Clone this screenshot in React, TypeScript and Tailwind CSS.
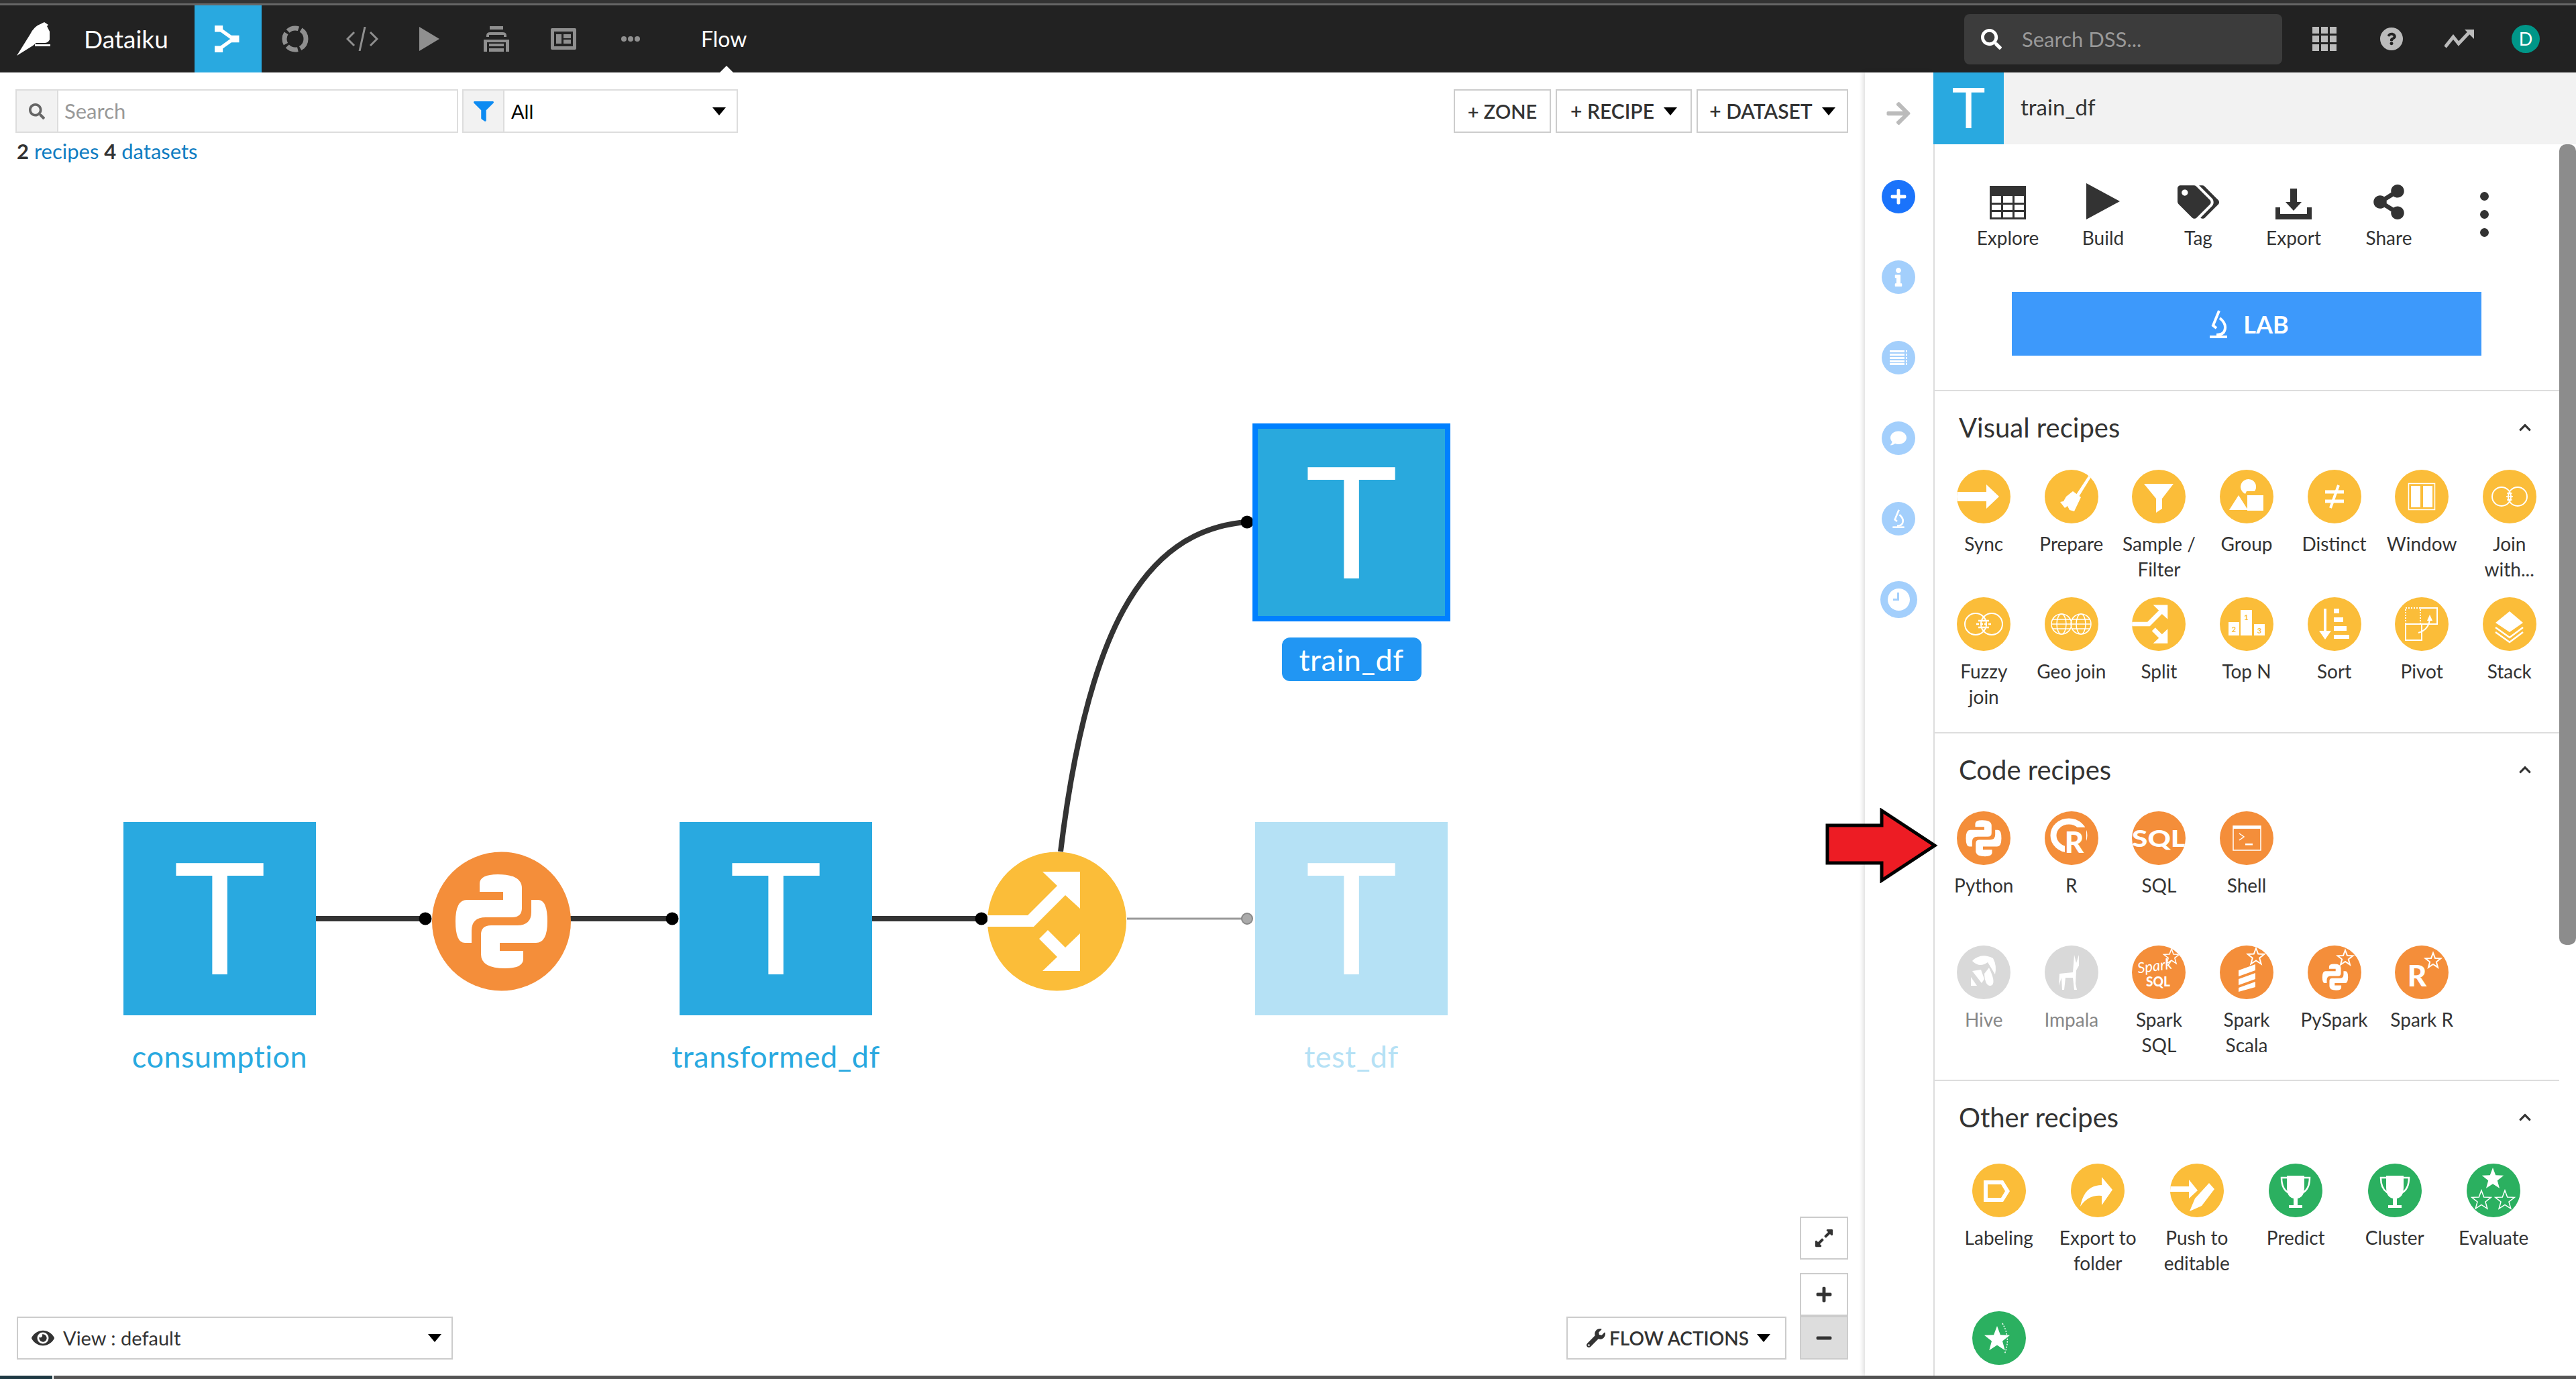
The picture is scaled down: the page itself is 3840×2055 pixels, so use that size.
import React from "react";
import { FaSearch, FaTags, FaShareAlt, FaEye, FaWrench, FaQuestion, FaFilter, FaChevronUp, FaArrowRight, FaPlus, FaInfo, FaComment, FaExpandAlt, FaMinus } from "react-icons/fa";

const SNAKE = "M71 60 V48 Q71 34 98 34 Q134 34 134 55 V84 Q134 98 119 98 H80 Q59 98 59 118 V136 H49 Q35 136 35 104 Q35 72 52 72 H106 V60 Z";
const Python = () => (
  <g fill="#fff">
    <path d={SNAKE} />
    <path d={SNAKE} transform="rotate(180 103.5 104)" />
  </g>
);
const SplitArrows = () => (
  <g fill="#fff">
    <polygon points="0,95 60,95 104,51 82,30 138,30 138,85 116,65 69,112 0,112" />
    <polygon points="77,130 90,117 116,143 138,122 138,178 82,178 104,157" />
  </g>
);
const Star = ({ x, y, r, fill = "#fff", stroke, sw = 1.5 }: { x: number; y: number; r: number; fill?: string; stroke?: string; sw?: number }) => {
  const pts: string[] = [];
  for (let i = 0; i < 10; i++) {
    const a = (-90 + i * 36) * (Math.PI / 180);
    const rr = i % 2 === 0 ? r : r * 0.42;
    pts.push(`${x + rr * Math.cos(a)},${y + rr * Math.sin(a)}`);
  }
  return <polygon points={pts.join(" ")} fill={fill} stroke={stroke} strokeWidth={sw} />;
};
const Trophy = () => (
  <g>
    <path d="M27 18 H53 V36 Q53 50 43 52 V62 H50 V66 H30 V62 H37 V52 Q27 50 27 36 Z" fill="#fff" />
    <path d="M27 21 H19 Q19 38 30 44 M53 21 H61 Q61 38 50 44" fill="none" stroke="#fff" strokeWidth="2.5" />
  </g>
);
const svgText = { fontFamily: "Lato, sans-serif", fill: "#fff" } as const;

const icons: Record<string, React.ReactNode> = {
  sync: <polygon points="0,33 44,33 44,22 63,40 44,58 44,47 0,47" fill="#fff" />,
  prepare: (
    <g fill="#fff">
      <polygon points="66,8 69,11 51,40 47,37" />
      <polygon points="42,32 54,41 44,62 37,60 34,54 30,57 23,48 28,47 32,40" />
    </g>
  ),
  filter: <polygon points="18,21 62,21 45,43 45,58 36,64 36,43" fill="#fff" />,
  group: (
    <g fill="#fff">
      <path d="M38 36 A11.5 11.5 0 1 1 52 32 L40 32 Z" />
      <polygon points="28,38 42,60 14,60" />
      <rect x="41" y="38" width="24" height="23" />
    </g>
  ),
  distinct: (
    <g stroke="#fff" fill="none">
      <path d="M26 33 H54 M26 47 H54" strokeWidth="5" />
      <path d="M46 23 L34 57" strokeWidth="4" />
    </g>
  ),
  window: (
    <g>
      <rect x="20.5" y="20.5" width="39" height="39" fill="none" stroke="#fff" strokeWidth="1.5" />
      <rect x="24" y="24" width="14" height="32" fill="#fff" />
      <rect x="42" y="24" width="14" height="32" fill="#fff" />
    </g>
  ),
  join: (
    <g fill="none" stroke="#fff" strokeWidth="2">
      <circle cx="28" cy="40" r="14" />
      <circle cx="52" cy="40" r="14" />
      <path d="M36 35 H44 M35 40 H45 M36 45 H44" strokeWidth="1.5" />
    </g>
  ),
  fuzzy: (
    <g fill="none" stroke="#fff" strokeWidth="2">
      <circle cx="28" cy="40" r="16" />
      <circle cx="52" cy="40" r="16" />
      <path d="M32 35 H48 M29 40 H51 M32 45 H48" strokeWidth="2.5" strokeDasharray="4 2" />
    </g>
  ),
  geo: (
    <g fill="none" stroke="#fff" strokeWidth="1.5">
      <circle cx="25" cy="40" r="15" />
      <circle cx="54" cy="40" r="15" />
      <ellipse cx="25" cy="40" rx="7" ry="15" />
      <ellipse cx="54" cy="40" rx="7" ry="15" />
      <path d="M10 40 H40 M12 33 H38 M12 47 H38 M39 40 H69 M41 33 H67 M41 47 H67" />
    </g>
  ),
  split: (
    <svg x="0" y="0" width="80" height="80" viewBox="0 0 207 207">
      <SplitArrows />
    </svg>
  ),
  top: (
    <g>
      <rect x="31" y="19" width="17" height="38" fill="#fff" />
      <rect x="13" y="37" width="16" height="20" fill="#fff" />
      <rect x="51" y="40" width="16" height="17" fill="#fff" />
      <text x="39.5" y="34" textAnchor="middle" fontSize="11" fontWeight="700" style={{ ...svgText, fill: "#fbbd39" }}>1</text>
      <text x="21" y="52" textAnchor="middle" fontSize="11" fontWeight="700" style={{ ...svgText, fill: "#fbbd39" }}>2</text>
      <text x="59" y="54" textAnchor="middle" fontSize="11" fontWeight="700" style={{ ...svgText, fill: "#fbbd39" }}>3</text>
    </g>
  ),
  sort: (
    <g fill="#fff">
      <polygon points="24,17 28,17 28,50 35,50 26,63 17,50 24,50" />
      <rect x="39" y="17" width="8" height="7" />
      <rect x="39" y="30" width="14" height="7" />
      <rect x="39" y="43" width="19" height="7" />
      <rect x="39" y="56" width="23" height="6" />
    </g>
  ),
  pivot: (
    <g fill="none" stroke="#fff" strokeWidth="2">
      <path d="M16 16 H38 V40 H16 Z" strokeDasharray="2 2" />
      <path d="M38 16 H63 V40 H40" />
      <path d="M16 40 H40 V64 H16 Z" />
      <path d="M35 53 Q52 48 52 30" />
      <polygon points="52,26 56,35 48,35" fill="#fff" stroke="none" />
    </g>
  ),
  stack: (
    <g>
      <polygon points="40,21 60,38 40,52 19,38" fill="#fff" />
      <path d="M19 45 L40 60 L60 45 M19 52 L40 67 L60 52" fill="none" stroke="#fff" strokeWidth="2.5" />
    </g>
  ),
  python: (
    <svg x="0" y="0" width="80" height="80" viewBox="0 0 207 207">
      <Python />
    </svg>
  ),
  r: (
    <g>
      <ellipse cx="36" cy="36" rx="23" ry="21" fill="none" stroke="#fff" strokeWidth="9" />
      <rect x="30" y="24" width="32" height="40" fill="#f48e3a" />
      <text x="44" y="62" textAnchor="middle" fontSize="44" fontWeight="900" style={svgText}>R</text>
    </g>
  ),
  sql: <text x="40" y="53" textAnchor="middle" fontSize="35" fontWeight="900" textLength="80" lengthAdjust="spacingAndGlyphs" style={svgText}>SQL</text>,
  shell: (
    <g>
      <rect x="20" y="22" width="41" height="36" fill="none" stroke="#fff" strokeWidth="1.5" />
      <rect x="20" y="22" width="41" height="4" fill="#fff" />
      <path d="M29 33 L36 38 L29 43" fill="none" stroke="#fff" strokeWidth="1.5" />
      <rect x="38" y="48" width="11" height="2.5" fill="#fff" />
    </g>
  ),
  hive: (
    <g fill="#fff">
      <path d="M23 23 Q36 10 54 19 Q60 30 57 43 L46 25 Q34 34 23 23 Z" />
      <path d="M48 33 Q60 58 50 60 Q42 60 41 42 Z" />
      <polygon points="23,38 36,36 41,50 37,56" />
      <polygon points="21,47 30,60 21,60" />
    </g>
  ),
  impala: (
    <g fill="#fff">
      <path d="M44 14 L47 26 L51 14 L51 30 L47 37 L46 57 L48 66 L44 66 L42 48 L31 48 L29 66 L26 66 L25 48 L21 60 L22 42 L42 40 Z" />
    </g>
  ),
  sparksql: (
    <g>
      <Star x={59} y={17} r={12} fill="none" stroke="#fff" />
      <text x="35" y="38" textAnchor="middle" fontSize="22" fontStyle="italic" textLength="52" lengthAdjust="spacingAndGlyphs" transform="rotate(-8 35 38)" style={svgText}>Spark</text>
      <text x="39" y="61" textAnchor="middle" fontSize="21" fontWeight="900" textLength="36" lengthAdjust="spacingAndGlyphs" style={svgText}>SQL</text>
    </g>
  ),
  sparkscala: (
    <g>
      <Star x={54} y={17} r={13} fill="none" stroke="#fff" sw={2} />
      <path d="M28 37 L53 28 V37 L28 46 Z M28 50 L53 41 V50 L28 59 Z M28 63 L53 54 V62 L28 69 Z" fill="#fff" />
    </g>
  ),
  pyspark: (
    <g>
      <svg x="12" y="18" width="58" height="58" viewBox="0 0 207 207">
        <Python />
      </svg>
      <Star x={56} y={19} r={12} fill="#f48e3a" stroke="#fff" sw={2} />
    </g>
  ),
  sparkr: (
    <g>
      <text x="33" y="61" textAnchor="middle" fontSize="44" fontWeight="900" style={svgText}>R</text>
      <Star x={57} y={23} r={12} fill="none" stroke="#fff" sw={2} />
    </g>
  ),
  labeling: (
    <g>
      <path d="M17 25 H46 L56 41 L46 57 H17 Z" fill="#fff" />
      <path d="M23 31 H43 L49 41 L43 51 H23 Z" fill="#fbbd39" />
    </g>
  ),
  exportf: <path d="M46 20 L62 39 L46 62 V48 Q26 46 14 64 Q20 32 46 32 Z" fill="#fff" />,
  pushto: (
    <g fill="#fff">
      <polygon points="0,34 28,34 28,24 41,40 28,52 28,42 0,42" />
      <polygon points="58,29 66,38 47,63 29,71 37,52" />
    </g>
  ),
  predict: <Trophy />,
  cluster: <Trophy />,
  evaluate: (
    <g>
      <Star x={39} y={23} r={17} />
      <Star x={22} y={55} r={15} fill="none" stroke="#fff" />
      <Star x={57} y={55} r={15} fill="none" stroke="#fff" />
    </g>
  ),
  goal: (
    <g>
      <Star x={37} y={42} r={20} />
      <path d="M45 18 Q58 40 48 64" fill="none" stroke="#fff" strokeWidth="1.5" strokeDasharray="2 2" />
    </g>
  ),
};

const YELLOW = "bg-[#fbbd39]";
const ORANGE = "bg-[#f48e3a]";
const GREEN = "bg-[#2bb060]";
const GREY = "bg-[#d9d9d9]";

type Item = { label: string; icon: string; color: string; muted?: boolean };

const Recipe = ({ item }: { item: Item }) => (
  <div className="flex flex-col items-center">
    <div className={`w-[80px] h-[80px] rounded-full overflow-hidden shrink-0 ${item.color}`}>
      <svg width="80" height="80" viewBox="0 0 80 80">{icons[item.icon]}</svg>
    </div>
    <div className={`mt-[11px] text-[28px] leading-[38px] text-center whitespace-pre ${item.muted ? "text-[#888]" : "text-[#333]"}`}>{item.label}</div>
  </div>
);

const SectionHead = ({ title }: { title: string }) => (
  <div className="flex items-center justify-between h-[52px] mt-[28px] pl-[36px] pr-[38px]">
    <span className="text-[40px] leading-[48px] text-[#333]">{title}</span>
    <FaChevronUp className="text-[#333] w-[26px] h-[20px]" />
  </div>
);

const visual: Item[] = [
  { label: "Sync", icon: "sync", color: YELLOW },
  { label: "Prepare", icon: "prepare", color: YELLOW },
  { label: "Sample /\nFilter", icon: "filter", color: YELLOW },
  { label: "Group", icon: "group", color: YELLOW },
  { label: "Distinct", icon: "distinct", color: YELLOW },
  { label: "Window", icon: "window", color: YELLOW },
  { label: "Join\nwith...", icon: "join", color: YELLOW },
  { label: "Fuzzy\njoin", icon: "fuzzy", color: YELLOW },
  { label: "Geo join", icon: "geo", color: YELLOW },
  { label: "Split", icon: "split", color: YELLOW },
  { label: "Top N", icon: "top", color: YELLOW },
  { label: "Sort", icon: "sort", color: YELLOW },
  { label: "Pivot", icon: "pivot", color: YELLOW },
  { label: "Stack", icon: "stack", color: YELLOW },
];
const code1: Item[] = [
  { label: "Python", icon: "python", color: ORANGE },
  { label: "R", icon: "r", color: ORANGE },
  { label: "SQL", icon: "sql", color: ORANGE },
  { label: "Shell", icon: "shell", color: ORANGE },
];
const code2: Item[] = [
  { label: "Hive", icon: "hive", color: GREY, muted: true },
  { label: "Impala", icon: "impala", color: GREY, muted: true },
  { label: "Spark\nSQL", icon: "sparksql", color: ORANGE },
  { label: "Spark\nScala", icon: "sparkscala", color: ORANGE },
  { label: "PySpark", icon: "pyspark", color: ORANGE },
  { label: "Spark R", icon: "sparkr", color: ORANGE },
];
const other: Item[] = [
  { label: "Labeling", icon: "labeling", color: YELLOW },
  { label: "Export to\nfolder", icon: "exportf", color: YELLOW },
  { label: "Push to\neditable", icon: "pushto", color: YELLOW },
  { label: "Predict", icon: "predict", color: GREEN },
  { label: "Cluster", icon: "cluster", color: GREEN },
  { label: "Evaluate", icon: "evaluate", color: GREEN },
  { label: "", icon: "goal", color: GREEN },
];

const Caret = ({ className = "" }: { className?: string }) => (
  <span className={`inline-block w-0 h-0 border-l-[10px] border-r-[10px] border-t-[12px] border-l-transparent border-r-transparent border-t-black ${className}`} />
);

const Microscope = ({ className = "" }: { className?: string }) => (
  <svg viewBox="0 0 30 44" className={className} fill="none" stroke="currentColor">
    <path d="M16 2 L7 24 L12 28" strokeWidth="4" />
    <path d="M17 13 Q28 22 24 32 Q22 38 12 38" strokeWidth="4" />
    <path d="M2 41 H28" strokeWidth="4" />
  </svg>
);

const BigT = ({ size = 232 }: { size?: number }) => (
  <span className="text-white font-[Lato,sans-serif] leading-none select-none -translate-y-[3%]" style={{ fontSize: size }}>T</span>
);

const Dataset = ({ left, top, w, h, label, tone = "bg-[#29a9e0]", labelClass = "text-[#29a9e0]" }: { left: number; top: number; w: number; h: number; label: string; tone?: string; labelClass?: string }) => (
  <div className="absolute" style={{ left, top, width: w }}>
    <div className={`flex items-center justify-center ${tone}`} style={{ height: h }}>
      <BigT />
    </div>
    <div className={`mt-[31px] flex justify-center whitespace-nowrap text-[45px] leading-[60px] tracking-[0.5px] ${labelClass}`}>{label}</div>
  </div>
);

const Node = ({ left, children }: { left: number; children: React.ReactNode }) => (
  <div className="absolute" style={{ left, top: 1161, width: 207, height: 208 }}>
    {children}
  </div>
);

const NavGlyph = ({ children }: { children: React.ReactNode }) => (
  <div className="w-[100px] h-full flex items-center justify-center text-[#8f8f8f]">{children}</div>
);

const App = () => (
  <div className="w-[3840px] h-[2055px] flex flex-col overflow-hidden bg-white font-[Lato,sans-serif]">
    <div className="h-[5px] bg-[#333] shrink-0" />
    <div className="h-[3px] bg-[#666] shrink-0" />
    <header className="h-[100px] bg-[#222] flex items-center shrink-0 relative">
      <div className="w-[125px] h-full flex items-center pl-[25px] shrink-0">
        <svg width="50" height="51" viewBox="0 0 50 51" fill="#fff">
          <path d="M0 50 L20 18 Q26 6 35 3 L41 0 L44 2 L47 4 L45 6 L49 14 V26 Q47 31 41 31 H29 L24 35 Z" />
          <rect x="27" y="33" width="23" height="3" />
        </svg>
      </div>
      <div className="w-[165px] text-white text-[37px] shrink-0">Dataiku</div>
      <div className="w-[100px] h-full bg-[#29a9e0] flex items-center justify-center shrink-0">
        <svg width="40" height="40" viewBox="0 0 46 46">
          <path d="M8 6 L32 23 L8 40" fill="none" stroke="#fff" strokeWidth="6" />
          <rect x="0" y="0" width="14" height="11" fill="#fff" />
          <rect x="0" y="35" width="14" height="11" fill="#fff" />
          <rect x="28" y="17" width="14" height="12" fill="#fff" />
        </svg>
      </div>
      <NavGlyph>
        <svg width="40" height="42" viewBox="0 0 40 42" fill="none" stroke="currentColor" strokeWidth="7">
          <circle cx="20" cy="21" r="16" strokeDasharray="17 4" />
        </svg>
      </NavGlyph>
      <NavGlyph>
        <svg width="48" height="36" viewBox="0 0 48 36" fill="none" stroke="currentColor" strokeWidth="3">
          <path d="M12 8 L2 18 L12 28 M36 8 L46 18 L36 28 M28 0 L20 36" />
        </svg>
      </NavGlyph>
      <NavGlyph>
        <svg width="30" height="36" viewBox="0 0 30 36" fill="currentColor"><polygon points="0,0 30,18 0,36" /></svg>
      </NavGlyph>
      <NavGlyph>
        <svg width="38" height="38" viewBox="0 0 38 38" fill="currentColor">
          <rect x="9" y="0" width="20" height="5" />
          <path d="M4 14 Q4 9 10 9 H28 Q34 9 34 14 V16 H30 V13 H8 V16 H4 Z" />
          <path fillRule="evenodd" d="M0 20 H38 V38 H33 V24 H5 V38 H0 Z" />
          <rect x="8" y="26" width="22" height="4" />
          <rect x="8" y="33" width="22" height="5" />
        </svg>
      </NavGlyph>
      <NavGlyph>
        <svg width="38" height="32" viewBox="0 0 38 32" fill="currentColor">
          <path fillRule="evenodd" d="M0 2 Q0 0 2 0 H36 Q38 0 38 2 V30 Q38 32 36 32 H2 Q0 32 0 30 Z M5 5 V27 H33 V5 Z" />
          <rect x="8" y="9" width="8" height="14" />
          <rect x="19" y="9" width="11" height="6" />
          <rect x="19" y="17" width="11" height="6" />
        </svg>
      </NavGlyph>
      <NavGlyph>
        <div className="flex gap-[2px]">
          <span className="w-[8px] h-[8px] rounded-full bg-[#8f8f8f]" />
          <span className="w-[8px] h-[8px] rounded-full bg-[#8f8f8f]" />
          <span className="w-[8px] h-[8px] rounded-full bg-[#8f8f8f]" />
        </div>
      </NavGlyph>
      <div className="ml-[55px] text-white text-[32px]">Flow</div>
      <span className="absolute left-[1073px] bottom-0 w-0 h-0 border-l-[10px] border-r-[10px] border-b-[10px] border-l-transparent border-r-transparent border-b-white" />
      <div className="ml-auto flex items-center h-full">
        <div className="w-[474px] h-[75px] bg-[#3c3c3c] rounded-[8px] flex items-center pl-[25px]">
          <FaSearch className="text-white w-[31px] h-[31px]" />
          <span className="ml-[30px] text-[31px] text-[#999]">Search DSS...</span>
        </div>
        <div className="w-[126px] flex justify-center">
          <div className="grid grid-cols-3 gap-[3px]">
            {Array.from({ length: 9 }).map((_, i) => (
              <span key={i} className="w-[10px] h-[10px] bg-[#bbb]" />
            ))}
          </div>
        </div>
        <div className="w-[74px] flex justify-center">
          <div className="w-[34px] h-[34px] rounded-full bg-[#bbb] flex items-center justify-center">
            <FaQuestion className="text-[#222] w-[14px] h-[20px]" />
          </div>
        </div>
        <div className="w-[128px] flex justify-center">
          <svg width="44" height="28" viewBox="0 0 44 28" fill="none" stroke="#bbb" strokeWidth="5">
            <path d="M1 26 L13 11 L21 21 L38 3" />
            <polygon points="30,0 44,0 44,14" fill="#bbb" stroke="none" />
          </svg>
        </div>
        <div className="ml-[14px] w-[42px] h-[42px] rounded-full bg-[#009688] text-white flex items-center justify-center text-[27px] mr-[54px]">D</div>
      </div>
    </header>

    <main className="flex-1 flex min-h-0">
      <section className="flex-1 relative flex flex-col min-w-0">
        <div className="flex justify-between items-start pt-[25px] pl-[23px] pr-[25px]">
          <div className="flex gap-[6px]">
            <div className="w-[660px] h-[65px] border-2 border-[#ddd] flex">
              <div className="w-[62px] bg-[#f2f2f2] border-r-2 border-[#ddd] flex items-center justify-center shrink-0">
                <FaSearch className="text-[#666] w-[24px] h-[24px]" />
              </div>
              <div className="pl-[9px] flex items-center text-[31px] text-[#999]">Search</div>
            </div>
            <div className="w-[411px] h-[65px] border-2 border-[#ddd] flex items-center">
              <div className="w-[61px] h-full bg-[#f2f2f2] border-r-2 border-[#ddd] flex items-center justify-center shrink-0">
                <FaFilter className="text-[#0d8bf2] w-[30px] h-[30px]" />
              </div>
              <span className="pl-[10px] text-[29px] text-black">All</span>
              <Caret className="ml-auto mr-[16px]" />
            </div>
          </div>
          <div className="flex gap-[7px] text-[#333] text-[30px] font-semibold">
            <div className="w-[145px] h-[65px] border-2 border-[#ccc] flex items-center justify-center text-[29px]">+ ZONE</div>
            <div className="w-[203px] h-[65px] border-2 border-[#ccc] flex items-center justify-center gap-[14px]">+ RECIPE <Caret /></div>
            <div className="w-[226px] h-[65px] border-2 border-[#ccc] flex items-center justify-center gap-[14px]">+ DATASET <Caret /></div>
          </div>
        </div>
        <div className="mt-[7px] pl-[25px] text-[31px] leading-[40px] text-[#0f7dc2]">
          <b className="text-[#333]">2</b> recipes <b className="text-[#333]">4</b> datasets
        </div>

        <svg className="absolute left-0 top-0 pointer-events-none" width="2777" height="1942" viewBox="0 108 2777 1942">
          <path d="M471 1369 H634 M850 1369 H1002 M1300 1369 H1463" stroke="#333" strokeWidth="8" fill="none" />
          <path d="M1581 1269 C1620 950 1700 790 1859 778" stroke="#333" strokeWidth="8" fill="none" />
          <path d="M1680 1369 H1859" stroke="#999" strokeWidth="3" fill="none" />
          <circle cx="634" cy="1369" r="9.5" fill="#000" />
          <circle cx="1002" cy="1369" r="9.5" fill="#000" />
          <circle cx="1463" cy="1369" r="9.5" fill="#000" />
          <circle cx="1859" cy="778" r="9.5" fill="#000" />
          <circle cx="1859" cy="1369" r="8" fill="#aaa" stroke="#888" strokeWidth="2" />
        </svg>

        <Dataset left={184} top={1117} w={287} h={288} label="consumption" />
        <Dataset left={1013} top={1117} w={287} h={288} label="transformed_df" />
        <Dataset left={1871} top={1117} w={287} h={288} label="test_df" tone="bg-[#b5e1f5]" labelClass="text-[#b5e1f5]" />

        <div className="absolute left-[1867px] top-[523px] w-[295px]">
          <div className="h-[295px] bg-[#29a9dd] border-[8px] border-[#0080ff] flex items-center justify-center">
            <BigT />
          </div>
          <div className="mt-[24px] mx-auto w-[208px] h-[65px] rounded-[12px] bg-[#2196f3] text-white text-[45px] leading-[66px] tracking-[0.5px] text-center">train_df</div>
        </div>

        <Node left={644}>
          <svg width="207" height="208" viewBox="0 0 207 208">
            <circle cx="103.5" cy="104" r="103.5" fill="#f48e3a" />
            <Python />
          </svg>
        </Node>
        <Node left={1472}>
          <svg width="207" height="208" viewBox="0 0 207 208">
            <circle cx="103.5" cy="104" r="103.5" fill="#fbbd39" />
            <SplitArrows />
          </svg>
        </Node>

        <div className="absolute left-[25px] right-[25px] bottom-[24px] flex items-end justify-between">
          <div className="w-[650px] h-[64px] border-2 border-[#ccc] bg-white flex items-center pl-[20px] pr-[15px] text-[29px] text-[#333]">
            <FaEye className="w-[34px] h-[34px]" />
            <span className="ml-[13px]">View : default</span>
            <Caret className="ml-auto" />
          </div>
          <div className="flex items-end gap-[20px]">
            <div className="w-[328px] h-[64px] border-2 border-[#ccc] bg-white flex items-center justify-center gap-[6px] pl-[6px] text-[28px] font-semibold text-[#333]">
              <FaWrench className="w-[28px] h-[28px]" />
              <span>FLOW ACTIONS</span>
              <Caret className="ml-[6px]" />
            </div>
            <div className="w-[72px] flex flex-col">
              <div className="h-[64px] border-2 border-[#ccc] flex items-center justify-center">
                <FaExpandAlt className="w-[30px] h-[30px] text-[#333]" />
              </div>
              <div className="mt-[20px] h-[64px] border-2 border-[#ccc] flex items-center justify-center">
                <FaPlus className="w-[26px] h-[26px] text-[#333]" />
              </div>
              <div className="h-[65px] border-2 border-[#ccc] bg-[#ddd] flex items-center justify-center">
                <FaMinus className="w-[26px] h-[26px] text-[#333]" />
              </div>
            </div>
          </div>
        </div>
      </section>

      <nav className="w-[102px] shrink-0 flex flex-col items-center shadow-[-3px_0_6px_rgba(0,0,0,0.12)] bg-white relative z-10 pr-[2px] pt-[41px]">
        <FaArrowRight className="w-[40px] h-[40px] text-[#bbb]" />
        <div className="mt-[79px] flex flex-col items-center gap-[70px]">
          <div className="w-[50px] h-[50px] rounded-full bg-[#1a73fb] flex items-center justify-center"><FaPlus className="text-white w-[26px] h-[26px]" /></div>
          <div className="w-[50px] h-[50px] rounded-full bg-[#a3cffc] flex items-center justify-center"><FaInfo className="text-white w-[22px] h-[28px]" /></div>
          <div className="w-[50px] h-[50px] rounded-full bg-[#a3cffc] flex items-center justify-center">
            <svg width="26" height="22" viewBox="0 0 26 22" fill="#fff">
              <rect x="0" y="0" width="22" height="3" />
              <rect x="0" y="5" width="22" height="3" />
              <rect x="0" y="10" width="22" height="3" />
              <rect x="0" y="15" width="22" height="3" />
              <rect x="0" y="19" width="22" height="3" />
              <rect x="24" y="0" width="2" height="3" />
              <rect x="24" y="5" width="2" height="3" />
              <rect x="24" y="10" width="2" height="3" />
              <rect x="24" y="15" width="2" height="3" />
              <rect x="24" y="19" width="2" height="3" />
            </svg>
          </div>
          <div className="w-[50px] h-[50px] rounded-full bg-[#a3cffc] flex items-center justify-center"><FaComment className="text-white w-[26px] h-[24px]" /></div>
          <div className="w-[50px] h-[50px] rounded-full bg-[#a3cffc] flex items-center justify-center text-white"><Microscope className="w-[20px] h-[30px]" /></div>
          <div className="w-[55px] h-[55px] rounded-full bg-[#a3cffc] flex items-center justify-center -my-[2px]">
            <div className="w-[33px] h-[33px] rounded-full bg-white relative">
              <span className="absolute left-[14px] top-[6px] w-[3px] h-[12px] bg-[#a3cffc]" />
              <span className="absolute left-[8px] top-[15px] w-[9px] h-[3px] bg-[#a3cffc]" />
            </div>
          </div>
        </div>
      </nav>

      <aside className="w-[958px] shrink-0 border-l-2 border-[#ddd] flex flex-col relative z-20 bg-white">
        <div className="h-[107px] bg-[#f2f2f2] flex items-center shrink-0 -ml-[2px]">
          <div className="w-[105px] h-full bg-[#29a9e0] flex items-center justify-center"><BigT size={84} /></div>
          <span className="ml-[25px] text-[33px] leading-[44px] text-[#333] -mt-[6px]">train_df</span>
        </div>
        <div className="flex-1 flex min-h-0 overflow-hidden">
          <div className="w-[931px] shrink-0 flex flex-col">
            <div className="pt-[58px] h-[308px] shrink-0 border-b-2 border-[#ddd] box-content">
              <div className="pl-[38px] flex text-[#333] text-[28px]">
                {[
                  {
                    l: "Explore",
                    i: (
                      <svg width="54" height="50" viewBox="0 0 54 50" fill="#333">
                        <path fillRule="evenodd" d="M0 0 H54 V50 H0 Z M3 15 V25 H17 V15 Z M20 15 V25 H34 V15 Z M37 15 V25 H51 V15 Z M3 28 V36 H17 V28 Z M20 28 V36 H34 V28 Z M37 28 V36 H51 V28 Z M3 39 V47 H17 V39 Z M20 39 V47 H34 V39 Z M37 39 V47 H51 V39 Z" />
                      </svg>
                    ),
                  },
                  {
                    l: "Build",
                    i: (
                      <svg width="50" height="54" viewBox="0 0 50 54" fill="currentColor">
                        <polygon points="0,0 50,27 0,54" />
                      </svg>
                    ),
                  },
                  { l: "Tag", i: <FaTags className="w-[62px] h-[52px]" /> },
                  {
                    l: "Export",
                    i: (
                      <svg width="54" height="46" viewBox="0 0 54 46" fill="currentColor">
                        <polygon points="22,0 32,0 32,20 39,20 27,33 15,20 22,20" />
                        <polygon points="0,28 7,28 7,38 47,38 47,28 54,28 54,46 0,46" />
                      </svg>
                    ),
                  },
                  { l: "Share", i: <FaShareAlt className="w-[52px] h-[52px]" /> },
                ].map((a) => (
                  <div key={a.l} className="w-[142px] flex flex-col items-center">
                    <div className="h-[54px] flex items-end justify-center">{a.i}</div>
                    <div className="mt-[8px] leading-[38px]">{a.l}</div>
                  </div>
                ))}
                <div className="w-[142px] flex justify-center pt-[13px]">
                  <div className="flex flex-col gap-[14px]">
                    <span className="w-[13px] h-[13px] rounded-full bg-[#333]" />
                    <span className="w-[13px] h-[13px] rounded-full bg-[#333]" />
                    <span className="w-[13px] h-[13px] rounded-full bg-[#333]" />
                  </div>
                </div>
              </div>
              <div className="ml-[115px] mt-[62px] w-[700px] h-[95px] bg-[#3d99fb] text-white flex items-center justify-center gap-[22px] pl-[6px] text-[36px] font-bold">
                <Microscope className="w-[30px] h-[44px]" />
                <span>LAB</span>
              </div>
            </div>

            <div className="shrink-0 border-b-2 border-[#ddd] h-[508px] box-content">
              <SectionHead title="Visual recipes" />
              <div className="mt-[37px] ml-[8px] w-[914px] grid grid-cols-7 auto-rows-[190px]">
                {visual.map((v) => <Recipe key={v.label} item={v} />)}
              </div>
            </div>

            <div className="shrink-0 border-b-2 border-[#ddd] h-[516px] box-content">
              <SectionHead title="Code recipes" />
              <div className="mt-[36px] ml-[8px] w-[914px] grid grid-cols-7 auto-rows-[200px]">
                {code1.map((v) => <Recipe key={v.label} item={v} />)}
                <div className="col-span-3" />
                {code2.map((v) => <Recipe key={v.label} item={v} />)}
              </div>
            </div>

            <div className="shrink-0">
              <SectionHead title="Other recipes" />
              <div className="mt-[43px] ml-[22px] w-[885px] grid grid-cols-6 auto-rows-[220px]">
                {other.map((v) => <Recipe key={v.icon} item={v} />)}
              </div>
            </div>
          </div>
          <div className="flex-1 relative">
            <div className="w-full h-[1193px] bg-[#8c8c8c] rounded-[10px]" />
          </div>
        </div>
        <svg className="absolute left-[-163px] top-[1096px]" width="170" height="112" viewBox="0 0 170 112">
          <polygon points="3,26 84,26 84,4 163,56 84,108 84,82 3,82" fill="#ed1c24" stroke="#000" strokeWidth="5" />
        </svg>
      </aside>
    </main>
    <div className="h-[5px] shrink-0 flex">
      <div className="w-[78px] bg-[#1f3a44]" />
      <div className="w-[2px] bg-white" />
      <div className="flex-1 bg-[#555]" />
    </div>
  </div>
);

export default App;
